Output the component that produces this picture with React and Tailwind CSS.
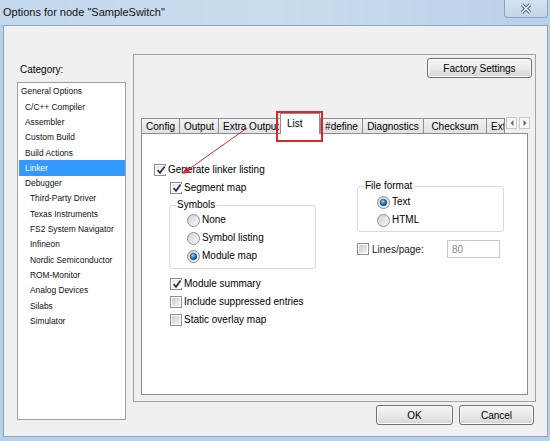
import React from 'react';

const categories = [
    { label: 'General Options', level: 0 },
    { label: 'C/C++ Compiler', level: 1 },
    { label: 'Assembler', level: 1 },
    { label: 'Custom Build', level: 1 },
    { label: 'Build Actions', level: 1 },
    { label: 'Linker', level: 1, selected: true },
    { label: 'Debugger', level: 1 },
    { label: 'Third-Party Driver', level: 2 },
    { label: 'Texas Instruments', level: 2 },
    { label: 'FS2 System Navigator', level: 2 },
    { label: 'Infineon', level: 2 },
    { label: 'Nordic Semiconductor', level: 2 },
    { label: 'ROM-Monitor', level: 2 },
    { label: 'Analog Devices', level: 2 },
    { label: 'Silabs', level: 2 },
    { label: 'Simulator', level: 2 },
];

const indent = ['pl-[2px]', 'pl-[6px]', 'pl-[11px]'];

const tabs = [
    { label: 'Config', w: 'w-[38px]' },
    { label: 'Output', w: 'w-[39px]' },
    { label: 'Extra Output', w: 'w-[62px]', left: true },
    { label: 'List', w: 'w-[40px]', active: true },
    { label: '#define', w: 'w-[42px]' },
    { label: 'Diagnostics', w: 'w-[61px]' },
    { label: 'Checksum', w: 'w-[63px]' },
    { label: 'Ext', w: 'w-[19px]', left: true },
];

const Check = ({ checked }) => (
    <span className="w-[12px] h-[12px] border border-[#8e8f8f] bg-white p-px shrink-0 flex">
        <span
            className={`flex-1 flex items-center justify-center bg-linear-to-br ${
                checked ? 'from-[#e8e8e8] to-[#ffffff]' : 'from-[#cfcfcf] to-[#f3f3f3]'
            }`}
        >
            {checked && (
                <svg width="10" height="10" viewBox="0 0 10 10">
                    <path d="M1.6 5.2 L4 7.8 L8.6 1.6" fill="none" stroke="#24345e" strokeWidth="1.7" />
                </svg>
            )}
        </span>
    </span>
);

const Radio = ({ checked }) => (
    <svg width="13" height="13" viewBox="0 0 13 13" className="shrink-0">
        <defs>
            <linearGradient id="radioFace" x1="0" y1="0" x2="1" y2="1">
                <stop offset="0" stopColor="#d0d0d0" />
                <stop offset="1" stopColor="#fbfbfb" />
            </linearGradient>
            <radialGradient id="radioDot" cx="0.4" cy="0.35" r="0.7">
                <stop offset="0" stopColor="#9fdcfb" />
                <stop offset="0.5" stopColor="#2d7fc2" />
                <stop offset="1" stopColor="#0d3b6e" />
            </radialGradient>
        </defs>
        <circle cx="6.5" cy="6.5" r="6" fill="url(#radioFace)" stroke="#8e8f8f" />
        {checked && <circle cx="6.5" cy="6.5" r="3.3" fill="url(#radioDot)" stroke="#20405f" strokeWidth="0.6" />}
    </svg>
);

const Button = ({ children, w }) => (
    <button
        className={`${w} h-[20px] border border-[#707070] rounded-[3px] bg-linear-to-b from-[#f6f6f6] via-[#e9e9e9] to-[#d5d5d5] shadow-[inset_0_0_0_1px_#fbfbfb] text-[10px] text-black flex items-center justify-center`}
    >
        {children}
    </button>
);

const CheckRow = ({ checked, label, className = '' }) => (
    <div className={`h-[18px] flex items-center gap-[2px] ${className}`}>
        <Check checked={checked} />
        <span className="leading-[12px]">{label}</span>
    </div>
);

const RadioRow = ({ checked, label }) => (
    <div className="h-[18px] flex items-center gap-[2px]">
        <Radio checked={checked} />
        <span className="leading-[12px]">{label}</span>
    </div>
);

// group box: legend sits on the top border, options below it
const Group = ({ title, className = '', bodyClass = '', children }) => (
    <fieldset className={`border border-[#d5dbe0] rounded-[3px] ${className}`}>
        <legend className="ml-[6px] px-px leading-[12px]">{title}</legend>
        <div className={bodyClass}>{children}</div>
    </fieldset>
);

export default function App() {
    return (
        <div className="relative w-[550px] h-[441px] bg-[#b9d0e9] flex flex-col overflow-hidden font-['Segoe_UI','Liberation_Sans',Arial,sans-serif] text-black">
            {/* title bar */}
            <div className="h-[25px] shrink-0 flex items-start bg-linear-to-r from-[#c4d8ed] via-[#cadcef] to-[#b9d0e9]">
                <span className="pl-[3px] h-[24px] flex items-center text-[11px] text-[#111]">Options for node "SampleSwitch"</span>
                <button className="ml-auto mr-[2px] w-[44px] h-[18px] border border-t-0 border-[#8ea3bc] rounded-b-[4px] bg-linear-to-b from-[#d6e3f1] to-[#c2d5ea] flex items-center justify-center">
                    <svg width="12" height="11" viewBox="0 0 12 11">
                        <path d="M2 1.5 L10 9.5 M10 1.5 L2 9.5" stroke="#4a5566" strokeWidth="3.2" />
                        <path d="M2 1.5 L10 9.5 M10 1.5 L2 9.5" stroke="#f4f7fb" strokeWidth="1.6" />
                    </svg>
                </button>
            </div>

            {/* client area */}
            <div className="ml-[3px] mr-[2px] h-[412px] border border-[#8ea5c0] bg-[#f0f0f0] flex">
                <div className="pl-[13px] pt-[38px] w-[122px] shrink-0">
                    <div className="pl-[3px] text-[10px] leading-[12px]">Category:</div>
                    <div className="mt-[6px] w-[109px] h-[338px] border border-[#a0a0a0] bg-white pt-px text-[8.4px] font-['Tahoma','Liberation_Sans',Arial,sans-serif]">
                        {categories.map((c) => (
                            <div
                                key={c.label}
                                className={`ml-px h-[15.3px] flex items-center whitespace-nowrap ${indent[c.level]} ${
                                    c.selected ? 'bg-[#3399ff] text-white' : 'text-[#111]'
                                }`}
                            >
                                {c.label}
                            </div>
                        ))}
                    </div>
                </div>

                <div className="ml-[7px] pt-[28px] w-[403px] shrink-0 flex flex-col">
                    <div className="h-[348px] border border-[#a3a3a3] flex flex-col">
                        <div className="flex justify-end pr-[3px] pt-[3px]">
                            <Button w="w-[105px]">Factory Settings</Button>
                        </div>

                        {/* tab strip */}
                        <div className="mt-[35px] ml-[7px] h-[20px] flex items-end text-[10px]">
                            {tabs.map((t) =>
                                t.active ? (
                                    <div
                                        key={t.label}
                                        className={`${t.w} h-[21px] -mb-px relative z-10 bg-white border border-b-0 border-[#8c8e94] pl-[6px] pt-[4px] leading-[12px]`}
                                    >
                                        {t.label}
                                    </div>
                                ) : (
                                    <div
                                        key={t.label}
                                        className={`${t.w} h-[15px] border-t border-l border-[#8c8e94] bg-linear-to-b from-[#f3f3f3] to-[#e1e1e1] flex items-center overflow-hidden whitespace-nowrap ${
                                            t.left ? 'pl-[4px]' : 'justify-center'
                                        } ${t.label === 'Ext' ? 'border-r pl-[1px]' : ''}`}
                                    >
                                        {t.label}
                                    </div>
                                )
                            )}
                            <div className="ml-[1px] mb-[4px] flex gap-[2px]">
                                <span className="w-[11px] h-[12px] border border-[#c9c9c9] bg-[#f7f7f7] flex items-center justify-center">
                                    <svg width="4" height="6" viewBox="0 0 4 6">
                                        <path d="M3.5 0 L0.5 3 L3.5 6 Z" fill="#6a6a6a" />
                                    </svg>
                                </span>
                                <span className="w-[11px] h-[12px] border border-[#c9c9c9] bg-[#f7f7f7] flex items-center justify-center">
                                    <svg width="4" height="6" viewBox="0 0 4 6">
                                        <path d="M0.5 0 L3.5 3 L0.5 6 Z" fill="#6a6a6a" />
                                    </svg>
                                </span>
                            </div>
                        </div>

                        {/* List page */}
                        <div className="mx-[7px] h-[262px] border border-[#8c8e94] bg-white flex pl-[12px] text-[10px]">
                            <div className="pt-[27px] w-[162px] shrink-0">
                                <CheckRow checked label="Generate linker listing" />
                                <CheckRow checked label="Segment map" className="pl-[16px]" />
                                <Group title="Symbols" className="mt-[2px] ml-[15px] w-[147px] pb-[3px]" bodyClass="pl-[17px]">
                                    <RadioRow label="None" />
                                    <RadioRow label="Symbol listing" />
                                    <RadioRow checked label="Module map" />
                                </Group>
                                <div className="mt-[6px] pl-[16px]">
                                    <CheckRow checked label="Module summary" />
                                    <CheckRow label="Include suppressed entries" />
                                    <CheckRow label="Static overlay map" />
                                </div>
                            </div>

                            <div className="ml-[41px] pt-[46px] w-[147px] shrink-0">
                                <Group title="File format" className="pb-[2px]" bodyClass="pl-[19px] pt-px">
                                    <RadioRow checked label="Text" />
                                    <RadioRow label="HTML" />
                                </Group>
                                <div className="mt-[8px] h-[18px] flex items-center gap-[3px]">
                                    <Check />
                                    <span className="w-[72px] text-[#222]">Lines/page:</span>
                                    <span className="w-[53px] h-[18px] border border-[#c5c8cc] bg-white text-[#8a8a8a] pl-[4px] flex items-center">
                                        80
                                    </span>
                                </div>
                            </div>
                        </div>
                    </div>

                    <div className="mt-[3px] pr-[2px] flex justify-end gap-[6px]">
                        <Button w="w-[77px]">OK</Button>
                        <Button w="w-[75px]">Cancel</Button>
                    </div>
                </div>
            </div>

            {/* callout marking the List tab */}
            <div className="absolute left-[276px] top-[111px] w-[47px] h-[31px] border-2 border-[#d9262b] pointer-events-none" />
            <svg className="absolute left-0 top-0 pointer-events-none" width="550" height="441">
                <line x1="247" y1="128" x2="187" y2="170.5" stroke="#d42a2a" strokeWidth="1" />
                <polygon points="182,174 190.5,172.3 186.5,166.5" fill="#d42a2a" />
            </svg>
        </div>
    );
}
